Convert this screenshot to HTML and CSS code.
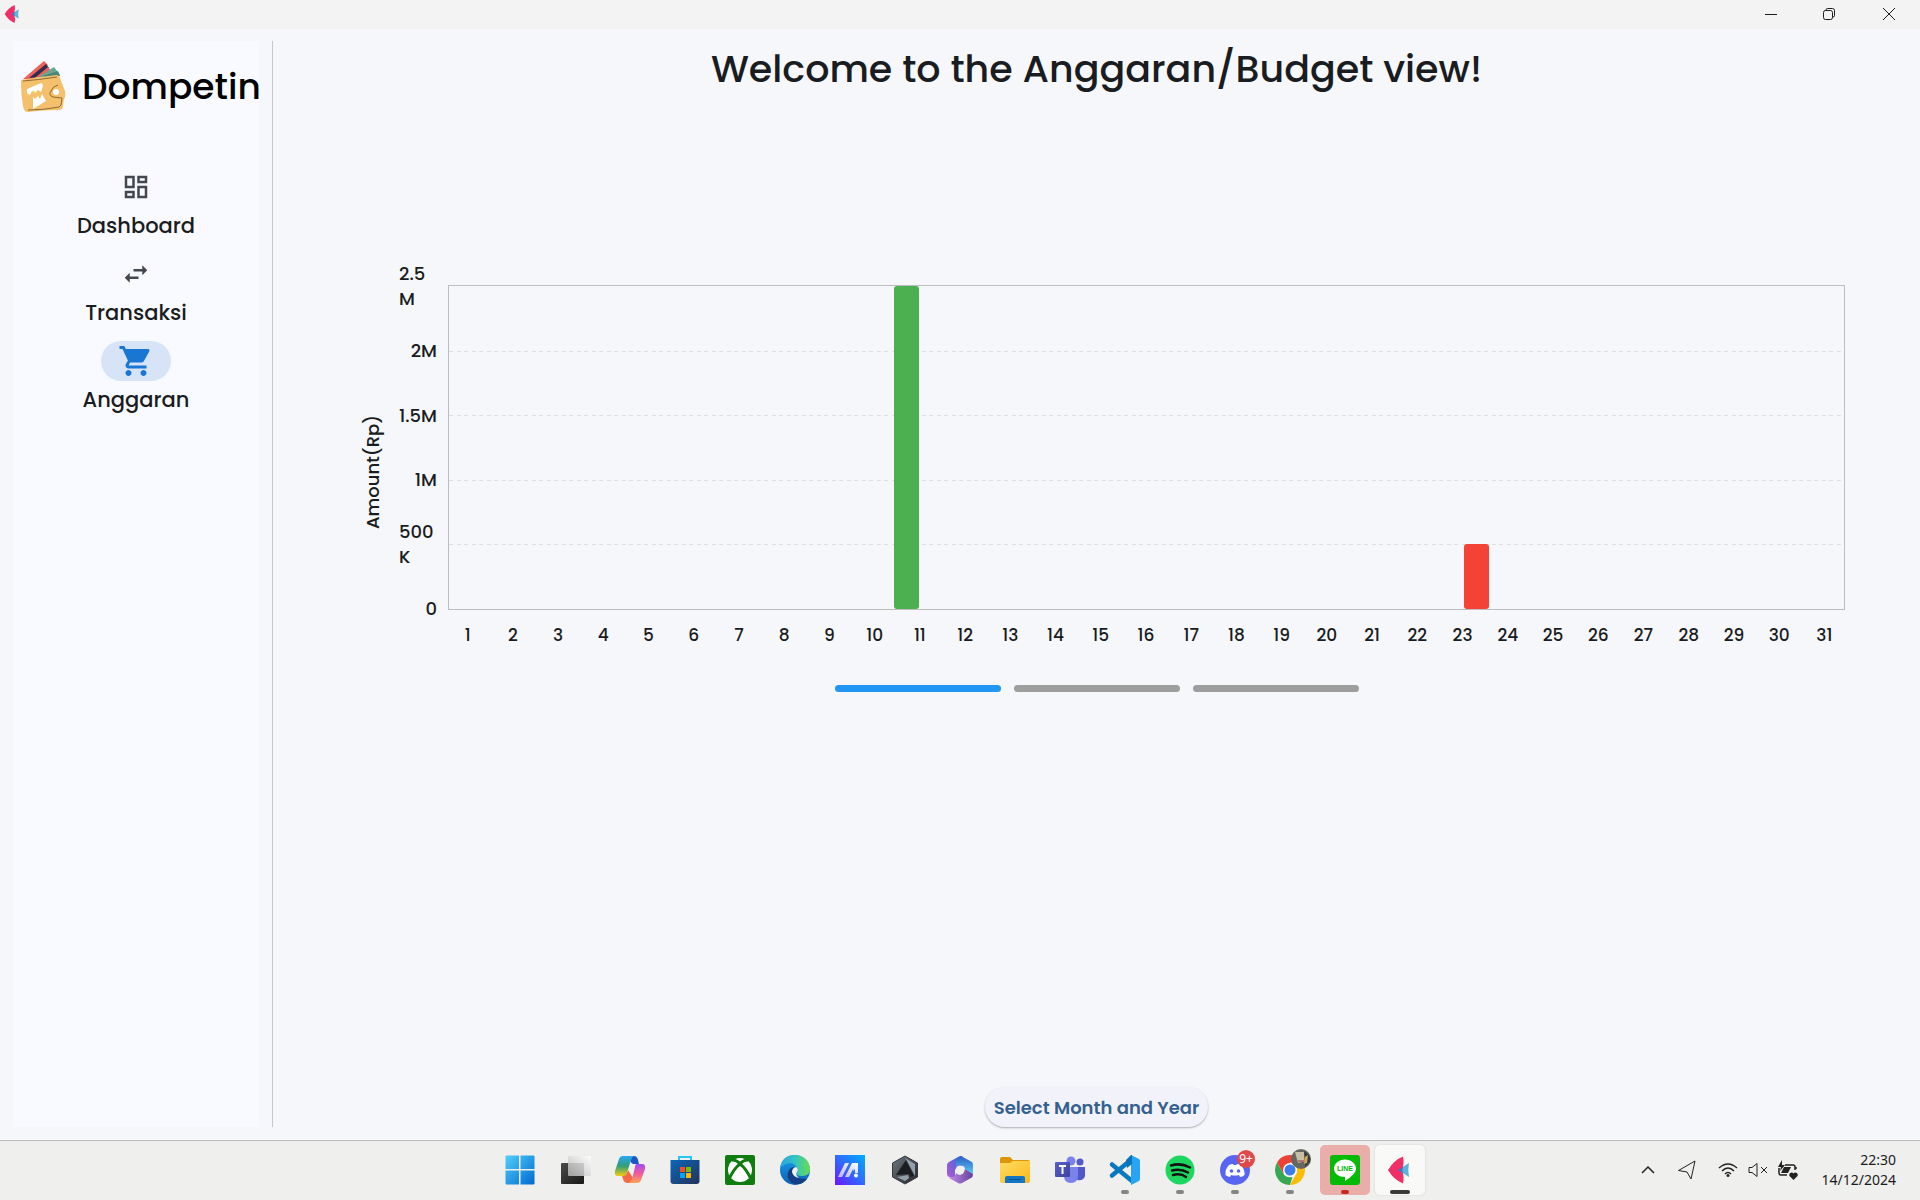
FILE: index.html
```html
<!DOCTYPE html>
<html lang="en">
<head>
<meta charset="utf-8">
<meta name="viewport" content="width=device-width, initial-scale=1">
<title>Dompetin</title>
<link rel="stylesheet" href="styles.css">
</head>
<body>
<svg class="defs" aria-hidden="true">
  <defs>
    <linearGradient id="win" x1="0" y1="0" x2="1" y2="1"><stop offset="0" stop-color="#4fd0fb"/><stop offset="1" stop-color="#0068cf"/></linearGradient>
    <linearGradient id="tv1" x1="0" y1="0" x2="1" y2="1"><stop offset="0" stop-color="#4a4a48"/><stop offset="1" stop-color="#181818"/></linearGradient>
    <linearGradient id="tv2" x1="0" y1="1" x2="1" y2="0"><stop offset="0" stop-color="#b4b4b4"/><stop offset="1" stop-color="#ffffff"/></linearGradient>
    <linearGradient id="cp1" x1="0" y1="0" x2="0" y2="1"><stop offset="0" stop-color="#2aa6f5"/><stop offset=".5" stop-color="#2f9e7a"/><stop offset="1" stop-color="#f5cc10"/></linearGradient>
    <linearGradient id="cp2" x1="0" y1="0" x2="0" y2="1"><stop offset="0" stop-color="#a24df0"/><stop offset=".5" stop-color="#ef5a9c"/><stop offset="1" stop-color="#fda352"/></linearGradient>
    <linearGradient id="store" x1="0" y1="0" x2="1" y2="1"><stop offset="0" stop-color="#0b67b8"/><stop offset="1" stop-color="#24325a"/></linearGradient>
    <linearGradient id="edge1" x1="0" y1="0" x2="1" y2="0"><stop offset="0" stop-color="#2aa5e0"/><stop offset=".5" stop-color="#34c3c5"/><stop offset="1" stop-color="#68dd4c"/></linearGradient>
    <linearGradient id="edge2" x1="0" y1="0" x2="0" y2="1"><stop offset="0" stop-color="#1ba2e6"/><stop offset="1" stop-color="#0b5fb9"/></linearGradient>
    <linearGradient id="asus" x1="0" y1="1" x2="1" y2="0"><stop offset="0" stop-color="#6d14ff"/><stop offset=".5" stop-color="#2f6bff"/><stop offset="1" stop-color="#00adff"/></linearGradient>
    <linearGradient id="asus2" x1="1" y1="0" x2="0" y2="1"><stop offset="0" stop-color="#ffffff"/><stop offset="1" stop-color="#b7b4ff"/></linearGradient>
    <linearGradient id="hex" x1="0" y1="0" x2="1" y2="1"><stop offset="0" stop-color="#6d7780"/><stop offset="1" stop-color="#25272b"/></linearGradient>
    <linearGradient id="m1" x1="0" y1="1" x2="1" y2="0"><stop offset="0" stop-color="#b25ad8"/><stop offset="1" stop-color="#3668d2"/></linearGradient>
    <linearGradient id="m2" x1="0" y1="0" x2="0" y2="1"><stop offset="0" stop-color="#2f5dc4"/><stop offset="1" stop-color="#57cbf7"/></linearGradient>
    <linearGradient id="m3" x1="0" y1="0" x2="1" y2="0"><stop offset="0" stop-color="#c48be8"/><stop offset="1" stop-color="#61409c"/></linearGradient>
    <linearGradient id="fold" x1="0" y1="0" x2="1" y2="1"><stop offset="0" stop-color="#ffdc63"/><stop offset="1" stop-color="#f9b91c"/></linearGradient>
    <linearGradient id="team" x1="0" y1="0" x2="1" y2="1"><stop offset="0" stop-color="#5a62c8"/><stop offset="1" stop-color="#3940a0"/></linearGradient>
    <symbol id="fish" viewBox="0 0 30 30"><path fill="#5ab4dc" d="M11 15 22 8Q20.500 15 22 22Z"/><path fill="#ef2f66" d="M1 15Q7 5 16 1.500 17.500 8 15 15 17.500 22 16 28.500 7 25 1 15Z"/><path fill="#3d78c4" d="M11 15 16 12 15.300 15 16 18Z"/></symbol>
  </defs>
</svg>

<header class="titlebar">
  <svg class="app-mark" aria-hidden="true"><use href="#fish"/></svg>
  <div class="window-controls">
    <button aria-label="Minimize"><svg viewBox="0 0 14 14"><path d="M1 7.500h12"/></svg></button>
    <button aria-label="Restore"><svg viewBox="0 0 14 14"><rect x="1.500" y="3.500" width="9" height="9" rx="2"/><path d="M4 3.500V3q0-1.500 1.500-1.500h5q2 0 2 2v5q0 1.500-1.500 1.500h-.5"/></svg></button>
    <button aria-label="Close"><svg viewBox="0 0 14 14"><path d="m1 1 12 12M13 1 1 13"/></svg></button>
  </div>
</header>

<div class="app">
  <aside class="sidebar">
    <div class="brand">
      <svg class="wallet" viewBox="0 0 46 54" aria-hidden="true">
        <path fill="#ee625c" d="M3 19 24 1l4 4-14 14z"/><path fill="#322c4d" d="M9 18 26 4l3 4-9 9z"/><path fill="#ee625c" d="M16 17 28 7l3 4-6 6z"/><path fill="#69a792" d="M17 18 34 7l6 8-8 3z"/><path fill="#4f8579" d="M22 16l16-5 2 5-12 2z"/>
        <path fill="#f5c06b" d="M1 20Q18 17 37 15q3 1 4 6l4 10q1 5-1 8l-1 7q0 4-4 4Q22 50 8 52q-4 0-5-6Q1 34 1 24Z"/>
        <path d="M3 21q14-1 34-4M8 50q16 0 31-3l2-2 1-7-9-1q-5-2-2-6 2-5 7-6" fill="none" stroke="#8b6a36" stroke-width="1"/>
        <path fill="#fff" d="m7 29 14-6q3 1 1 6l-1 3-3-2-3 3-3-2-2 4q-4-1-3-6ZM13 37l2 2 3-3 2 3 2-5 4 7-13 8Z"/><circle cx="36" cy="32" r="3" fill="#fff"/><circle cx="14" cy="32" r="1" fill="#e9dc1c"/>
      </svg>
      <span class="brand-name">Dompetin</span>
    </div>
    <nav class="rail">
      <a class="rail-item" href="#dashboard">
        <span class="rail-icon"><svg viewBox="0 0 24 24"><path d="M19 5v2h-4V5h4M9 5v6H5V5h4m10 8v6h-4v-6h4M9 17v2H5v-2h4M21 3h-8v6h8V3zM11 3H3v10h8V3zm10 8h-8v10h8V11zm-10 4H3v6h8v-6z"/></svg></span>
        <span>Dashboard</span>
      </a>
      <a class="rail-item" href="#transaksi">
        <span class="rail-icon"><svg viewBox="0 0 24 24"><path d="M6.990 11 3 15l3.990 4v-3H14v-2H6.990v-3zM21 9l-3.990-4v3H10v2h7.010v3L21 9z"/></svg></span>
        <span>Transaksi</span>
      </a>
      <a class="rail-item selected" href="#anggaran" aria-current="page">
        <span class="rail-icon"><svg viewBox="0 0 24 24"><path d="M7 18c-1.100 0-1.990.9-1.990 2S5.900 22 7 22s2-.9 2-2-.9-2-2-2zM1 2v2h2l3.600 7.590-1.350 2.450c-.16.28-.25.61-.25.96 0 1.100.9 2 2 2h12v-2H7.420c-.14 0-.25-.11-.25-.25l.03-.12.900-1.630h7.450c.75 0 1.410-.41 1.750-1.030l3.580-6.490c.08-.14.12-.31.12-.48 0-.55-.45-1-1-1H5.210l-.94-2H1zm16 16c-1.100 0-1.990.9-1.990 2s.89 2 1.990 2 2-.9 2-2-.9-2-2-2z"/></svg></span>
        <span>Anggaran</span>
      </a>
    </nav>
  </aside>

  <main class="content">
    <h1>Welcome to the Anggaran/Budget view!</h1>

    <section class="chart" aria-label="Amount per day">
      <div class="axis-title">Amount(Rp)</div>
      <div class="y-axis">
        <span class="wrap">2.5<br>M</span><span>2M</span><span>1.5M</span><span>1M</span><span class="wrap">500<br>K</span><span>0</span>
      </div>
      <div class="plot">
        <div class="grid"><i></i><i></i><i></i><i></i><i></i></div>
        <div class="bars">
          <div class="bar income" style="height:100%;margin-left:31.900%"></div>
          <div class="bar expense" style="height:20%;margin-left:39.100%"></div>
        </div>
      </div>
      <div class="x-axis">
        <span>1</span><span>2</span><span>3</span><span>4</span><span>5</span><span>6</span><span>7</span><span>8</span><span>9</span><span>10</span><span>11</span><span>12</span><span>13</span><span>14</span><span>15</span><span>16</span><span>17</span><span>18</span><span>19</span><span>20</span><span>21</span><span>22</span><span>23</span><span>24</span><span>25</span><span>26</span><span>27</span><span>28</span><span>29</span><span>30</span><span>31</span>
      </div>
    </section>

    <div class="pager">
      <button class="current" aria-label="Chart 1"></button><button aria-label="Chart 2"></button><button aria-label="Chart 3"></button>
    </div>

    <button class="pick-month">Select Month and Year</button>
  </main>
</div>

<footer class="taskbar">
  <div></div>
  <div class="apps">
    <button aria-label="Start"><svg viewBox="0 0 30 30"><path fill="url(#win)" d="M1.500.5H14v13.500H.5V1.500q0-1 1-1ZM15.500.5h13q1 0 1 1V14h-14ZM.5 15.500H14v14H1.500q-1 0-1-1ZM15.500 15.500h14v13q0 1-1 1h-13Z"/></svg></button>
    <button aria-label="Task view"><svg viewBox="0 0 30 30"><rect x="1" y="8" width="23" height="21" rx="1" fill="url(#tv1)"/><rect x="8" y="1" width="23" height="20" rx="1" fill="url(#tv2)" opacity=".85"/></svg></button>
    <button aria-label="Copilot"><svg viewBox="0 0 30 30"><path fill="#1b56c8" d="M14 1h5q3 0 4 4l1 4h-5q-3 0-4-4Z"/><path fill="url(#cp1)" d="M8 1h11q-2 1-3 4l-4 13q-1 3-4 3H3q-4 0-3-5L4 4q1-3 4-3Z"/><path fill="#f26b45" d="M7 21q4 0 5-3l1-3 5 8-1 5h-4q-4 0-5-4Z"/><path fill="url(#cp2)" d="M22 9h5q4 0 3 5l-4 11q-1 3-4 3h-9q3-1 4-4l3-12q0-3 2-3Z"/></svg></button>
    <button aria-label="Store"><svg viewBox="0 0 30 30"><path d="M9 7V2h12v5" fill="none" stroke="#28c4f5" stroke-width="2"/><path fill="url(#store)" d="M.5 5h29v21q0 3-3 3h-23q-3 0-3-3Z"/><path fill="#f25022" d="M10 12h5v5h-5z"/><path fill="#7fba00" d="M16 12h5v5h-5z"/><path fill="#00a4ef" d="M10 18h5v5h-5z"/><path fill="#ffb900" d="M16 18h5v5h-5z"/></svg></button>
    <button aria-label="Xbox"><svg viewBox="0 0 30 30"><rect width="30" height="30" rx="2" fill="#107c10"/><circle cx="15" cy="15" r="12" fill="#fff"/><path d="M3 26Q9 13 15 9 21 13 27 26" fill="none" stroke="#107c10" stroke-width="3"/><path d="M7 5q5 0 8 4 3-4 8-4" fill="none" stroke="#107c10" stroke-width="3"/></svg></button>
    <button aria-label="Edge"><svg viewBox="0 0 30 30"><circle cx="15" cy="15" r="15" fill="url(#edge2)"/><path fill="url(#edge1)" d="M0 13Q2 0 15 0q14 1 15 14 0 7-8 7-6 0-5-3 2-4-2-8-6-5-15 3Z"/><path fill="#123f83" d="M27 24Q20 32 12 28q-7-5-3-13 2-3 5-3-4 12 13 12Z"/><path fill="#efefed" d="M16 12q-4 1-4 5 1 5 7 6-4-3-2-6 2-3-1-5Z"/></svg></button>
    <button aria-label="MyASUS"><svg viewBox="0 0 30 30"><path fill="url(#asus)" d="M0 0h30v30H0z"/><path fill="url(#asus2)" d="M10 8h4L7 22H3ZM17 8h4L14 22h-4ZM19 8h4v10h-3v-4l-2 2Z"/><circle cx="21" cy="20.500" r="2" fill="#fff"/></svg></button>
    <button aria-label="Armoury Crate"><svg viewBox="0 0 30 30"><path fill="url(#hex)" stroke="#35383c" d="m15 1 12.500 7v14L15 29 2.500 22V8Z"/><path fill="#93a0aa" d="m15 3 10 6v12L17 6ZM7 22l11-2 1 3-4 3Z"/><path fill="#1c1d20" d="M16 5 6 20l13-1 1 3 4-1Z"/></svg></button>
    <button aria-label="Microsoft 365"><svg viewBox="0 0 30 30"><path fill="url(#m1)" d="M15 1q2 0 3 1v9l-5 1-3 3v8q-8 0-8-4V10q0-2 2-3l9-5Z"/><path fill="url(#m2)" d="m16 1 11 6q1 1 1 3v9q-5-3-8-5 0-3-5-4-4 0-4 2V4Z"/><path fill="url(#m3)" d="m20 14 8 5q0 3-2 4l-9 5q-2 1-4 0l-9-5q7-1 7-5 5 5 9-4Z"/><circle cx="15" cy="15" r="4.500" fill="#efefed"/></svg></button>
    <button aria-label="File Explorer"><svg viewBox="0 0 30 30"><path fill="#dc9708" d="M0 4q0-2 2-2h8l3 3h15q2 0 2 2v5H0Z"/><path fill="url(#fold)" d="M0 8h10l3-2h17v20q0 2-2 2H2q-2 0-2-2Z"/><path fill="#1476c2" d="M5 28v-5q0-2 2-2h16q2 0 2 2v5Z"/><path stroke="#0b528f" d="M9 24.500h12"/></svg></button>
    <button aria-label="Teams"><svg viewBox="0 0 30 30"><circle cx="25" cy="7" r="3.500" fill="#5059c9"/><path fill="#5059c9" d="M20 12h10v9q-1 5-8 4Z"/><circle cx="16" cy="6" r="4.500" fill="#7b83eb"/><path fill="#7b83eb" d="M9 12h14v9q0 7-7 7t-7-7Z"/><rect y="7" width="15" height="15" rx="1" fill="url(#team)"/><path d="M4 11h7M7.500 11v8" stroke="#fff" stroke-width="2"/></svg></button>
    <button class="running" aria-label="Visual Studio Code"><svg viewBox="0 0 30 30"><path d="M2 9.500 22 26M2 20.500 22 4" stroke="#0879bf" stroke-width="4.500" stroke-linecap="round"/><path fill="#27a4f2" d="m21 0 8 4q1 1 1 2v18q0 1-1 2l-8 4Z"/><path fill="#0a73b9" d="m16 5 5-5h1v9l-5 4Z"/></svg></button>
    <button class="running" aria-label="Spotify"><svg viewBox="0 0 30 30"><circle cx="15" cy="15" r="14.500" fill="#1ed760"/><path d="M6 10.500q10-3 19 2M7 15.500q9-2 16 2M8 20q8-2 13 2" fill="none" stroke="#111" stroke-width="2.500" stroke-linecap="round"/></svg></button>
    <button class="running" aria-label="Discord"><svg viewBox="0 0 30 30"><circle cx="15" cy="15" r="15" fill="#5865f2"/><path fill="#fff" d="M9 10q3-1.500 4-1l.5 1h3l.5-1q2 0 4 1 4 5 3.500 10-2 2-4.500 2l-1-2q-4 1-8 0l-1 2q-3-.5-4.500-2Q5 14 9 10Z"/><circle cx="11.500" cy="16" r="1.800" fill="#5865f2"/><circle cx="18.500" cy="16" r="1.800" fill="#5865f2"/></svg><span class="badge">9+</span></button>
    <button class="running" aria-label="Chrome"><svg viewBox="0 0 30 30"><path fill="#ea4335" d="M2 7.500Q6 0 15 0t13 7.500H15L8.500 19Z"/><path fill="#34a853" d="M2 7.500 8.500 19q3 4 9 3L15 30Q6 30 2 22.500-2 15 2 7.500Z"/><path fill="#fbbc05" d="M28 7.500q4 7.500 0 15Q24 30 15 30l6.500-11.500q2-6-3-11Z"/><circle cx="15" cy="15" r="7" fill="#fff"/><circle cx="15" cy="15" r="5.500" fill="#3b7ded"/></svg><svg class="avatar" viewBox="0 0 20 20"><circle cx="10" cy="10" r="10" fill="#67665f"/><path fill="#c8bda5" d="M4 3h9l2 9-8 2Z"/><path fill="#353c46" d="M13 2q8 5 6 11l-5 5Z"/><path fill="#d3aa4c" d="m14 8 3-2-1 8-3 1Z"/><path fill="#b17379" d="M7 11h6v2H7z"/></svg></button>
    <button class="running alert" aria-label="LINE"><svg viewBox="0 0 30 30"><rect width="30" height="30" rx="3" fill="#06bb06"/><path fill="#fff" d="M15 4.500c6 0 11 4 11 9 0 4-4 8-11 12.500v-4C9 22 4 18.500 4 13.500s5-9 11-9Z"/><text class="line-word" x="15" y="16" text-anchor="middle">LINE</text></svg></button>
    <button class="running active" aria-label="Dompetin"><svg viewBox="0 0 30 30"><use href="#fish" x="2" width="30" height="30"/></svg></button>
  </div>
  <div class="tray">
    <button aria-label="Show hidden icons"><svg viewBox="0 0 20 20"><path d="m4 13 6-6 6 6" stroke-width="1.500"/></svg></button>
    <button class="location" aria-label="Location"><svg viewBox="0 0 20 20"><path d="M1.500 10.500 18 1l-4 18-4-7Z"/></svg></button>
    <button class="status" aria-label="Network, volume and battery">
      <svg viewBox="0 0 20 20"><path d="M1 8q9-8 18 0M4 11q6-6 12 0M7 14q3-3 6 0" stroke-width="1.500"/><circle cx="10" cy="15.500" r="1.500" fill="#222" stroke="none"/></svg>
      <svg viewBox="0 0 20 20"><path d="M1 7.500h3l5-4v13l-5-4H1ZM13 7l6 6M19 7l-6 6"/></svg>
      <svg viewBox="0 0 20 20"><path d="M7 5h8q2 0 2 2v3M1 8v5q0 2 2 2h6M17 8h2" stroke-width="1.500"/><path fill="#222" stroke="none" d="M4 0 0 7h3L2 11l5-6H4ZM6 7h7l-3 6H3ZM15.500 20l-4-4q-1-3 2-3.500 1.500 0 2 1 .5-1 2-1 3 .5 2 3.500Z"/></svg>
    </button>
    <time class="clock" datetime="2024-12-14T22:30"><span>22:30</span><span>14/12/2024</span></time>
  </div>
</footer>
</body>
</html>
```
FILE: styles.css
```css
* { box-sizing: border-box; }

body {
  margin: 0;
  min-height: 100vh;
  display: flex;
  flex-direction: column;
  background: #f6f7fb;
  color: #191c20;
  font-family: Poppins, Inter, sans-serif;
  font-size: 18px;
  font-weight: 500;
}

button {
  border: 0;
  padding: 0;
  background: none;
  color: inherit;
  font: inherit;
}

svg { display: block; }
.defs { position: absolute; width: 0; height: 0; }

/* Title bar */
.titlebar {
  height: 29px;
  display: flex;
  align-items: center;
  justify-content: space-between;
  padding: 0 0 2px 4px;
  background: #f3f3f3;
}
.app-mark { width: 20px; height: 20px; }
.window-controls { display: flex; }
.window-controls button { width: 58px; height: 27px; display: grid; place-items: center; }
.window-controls button:last-child { width: 62px; }
.window-controls svg { width: 14px; height: 14px; fill: none; stroke: #1c1c1c; }

/* Window body */
.app { flex: 1; display: flex; padding-top: 12px; }

.sidebar {
  display: flex;
  flex-direction: column;
  width: 246px;
  margin: 0 13px 13px;
  background: #f9faff;
}
.app::before { content: ""; order: 1; width: 1px; margin-bottom: 13px; background: #c3c7cf; }
.content { order: 2; }

.brand { display: flex; align-items: center; gap: 16px; height: 92px; padding-left: 7px; }
.wallet { width: 46px; height: 54px; flex: none; }
.brand-name { color: #000; font-size: 36px; line-height: 56px; }

.rail { display: flex; flex-direction: column; gap: 15px; padding-top: 34px; }
.rail-item {
  display: flex;
  flex-direction: column;
  align-items: center;
  gap: 5px;
  color: inherit;
  font-size: 21px;
  line-height: 27px;
  text-decoration: none;
}
.rail-icon { display: grid; place-items: center; width: 70px; height: 40px; border-radius: 20px; }
.rail-icon svg { width: 30px; height: 30px; fill: #43474e; }
.selected .rail-icon { background: #d7e3f7; }
.selected .rail-icon svg { width: 36px; height: 36px; fill: #1976d2; }

/* Content */
.content {
  flex: 1;
  min-width: 0;
  display: flex;
  flex-direction: column;
  align-items: center;
  padding-bottom: 13px;
}
h1 { margin: 0; font-size: 38px; font-weight: 500; line-height: 56px; }

.chart {
  align-self: stretch;
  display: grid;
  grid-template-columns: 24px 38px 1fr;
  grid-template-rows: 325px 49px;
  margin: 188px 75px 0 88px;
}
.axis-title {
  grid-row: span 2;
  writing-mode: vertical-rl;
  transform: rotate(180deg);
  text-align: center;
  line-height: 24px;
}
.y-axis { display: flex; flex-direction: column; justify-content: space-between; margin-left: 14px; padding: 1px 0; width: 38px; }
.y-axis span { height: 0; display: flex; align-items: center; justify-content: flex-end; line-height: 25px; white-space: nowrap; }
.y-axis .wrap { display: grid; align-content: center; justify-content: start; }
.plot { display: grid; margin-left: 25px; border: 1px solid #bdbdbd; }
.grid, .bars { grid-area: 1 / 1; }
.grid { display: grid; grid-template-rows: repeat(5, 1fr); }
.grid i + i {
  background: repeating-linear-gradient(90deg, #e0e0e2 0 4px, transparent 4px 8px, #e0e0e2 8px 12px, transparent 12px 15px) top / 100% 1px no-repeat;
}
.bars { display: flex; align-items: flex-end; }
.bar { width: 25px; border-radius: 3px; }
.income { background: #4caf50; }
.expense { background: #f44336; }
.x-axis {
  grid-column: 3;
  display: grid;
  grid-template-columns: repeat(31, 1fr);
  align-items: center;
  margin: 0 -2px 0 22px;
  font-size: 17px;
  text-align: center;
}

.pager { display: flex; gap: 13px; margin-top: 26px; }
.pager button { width: 166px; height: 7px; border-radius: 4px; background: #9e9e9e; }
.pager .current { background: #2196f3; }

.pick-month {
  margin-top: auto;
  height: 40px;
  padding: 0 9px;
  border-radius: 20px;
  background: #f2f3fa;
  box-shadow: 0 1px 2px rgba(0, 0, 0, .3);
  color: #36618e;
  font-weight: 600;
}

/* Taskbar */
.taskbar {
  height: 60px;
  display: grid;
  grid-template-columns: 1fr auto 1fr;
  align-items: center;
  padding-bottom: 2px;
  border-top: 1px solid #bbbbbd;
  background: #efefed;
}
.apps { display: flex; gap: 5px; }
.apps button { position: relative; width: 50px; height: 50px; display: grid; place-items: center; border-radius: 5px; }
.apps svg { width: 30px; height: 30px; overflow: visible; }
.running::after {
  content: "";
  position: absolute;
  bottom: 1px;
  left: 21px;
  width: 8px;
  height: 4px;
  border-radius: 2px;
  background: #858583;
}
.apps .alert { background: #e9aeaa; }
.alert::after { background: #c42b1c; }
.apps .active { background: #f9f9f8; box-shadow: 0 0 2px #cfcfcd; }
.active::after { left: 15px; width: 20px; background: #3a3a3a; }
.badge {
  position: absolute;
  top: 5px;
  right: 5px;
  width: 18px;
  height: 18px;
  border-radius: 9px;
  background: #e0484c;
  color: #fff;
  font: 12px/18px "Noto Sans", sans-serif;
  text-align: center;
}
.apps .avatar { position: absolute; top: 4px; right: 4px; width: 20px; height: 20px; }
.line-word { fill: #06bb06; font: 900 7px "Liberation Sans", sans-serif; }

.tray { display: flex; align-items: center; justify-content: flex-end; padding-right: 24px; }
.tray svg { width: 20px; height: 20px; fill: none; stroke: #222; }
.location { margin-left: 19px; }
.status { display: flex; gap: 10px; margin: 0 24px 0 21px; }
.clock { display: grid; text-align: right; color: #1c1c1c; font: 400 14px/20px "Noto Sans", sans-serif; }
```
